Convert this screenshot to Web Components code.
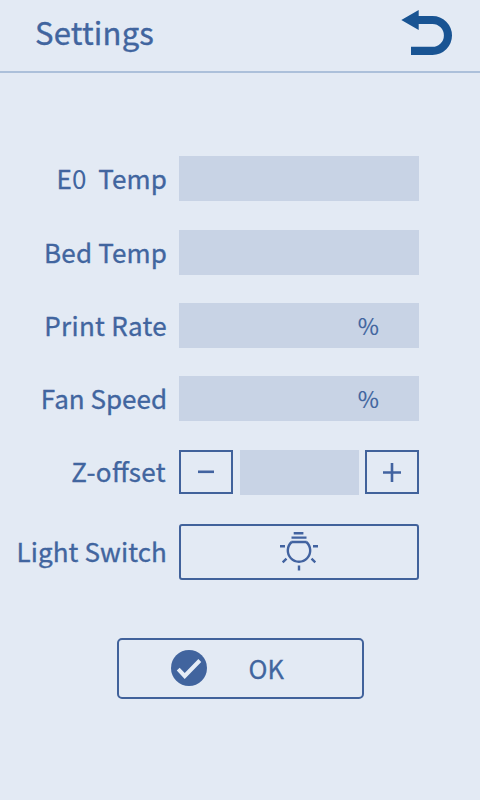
<!DOCTYPE html>
<html lang="en"><head><meta charset="utf-8"><title>Settings</title>
<style>
html,body{margin:0;height:100%;background:#e3eaf4}
body{font-family:"Noto Sans CJK SC","Noto Sans",sans-serif;font-weight:400;color:#41659f;overflow:hidden}
</style></head><body>
<settings-screen></settings-screen>
<script>
function define(name, html){
  const t=document.createElement('template'); t.innerHTML=html;
  customElements.define(name, class extends HTMLElement{
    constructor(){super();this.attachShadow({mode:'open'}).append(t.content.cloneNode(true));}
  });
}
define('settings-header', `<style>
:host{display:flex;justify-content:space-between;box-sizing:border-box;height:73px;border-bottom:2px solid #acc0da;padding:10px 27px 0 35px}
h1{margin:0;font-size:31px;line-height:44px;font-weight:400;letter-spacing:.2px;-webkit-text-stroke:.35px currentColor}
svg{display:block}
</style><h1><slot></slot></h1>
<svg width="52" height="45" viewBox="0 0 52 45" fill="#195493"><path d="M0.3 10 17.7 0V6H31.5A19.5 19.5 0 0 1 31.5 45H10V36.8H31.5A11.3 11.3 0 0 0 31.5 14H17.7V20Z"/></svg>`);
define('setting-row', `<style>
:host{display:grid;grid-template-columns:167px 240px;column-gap:12px;height:45px}
.label{font-size:26px;line-height:44px;text-align:right;white-space:pre;letter-spacing:var(--track,0);-webkit-text-stroke:.35px currentColor}
.control{display:flex;min-width:0}
</style><div class="label"><slot name="label"></slot></div><div class="control"><slot></slot></div>`);
define('value-field', `<style>
:host{display:block;flex:1;box-sizing:border-box;background:#c8d3e5;padding-right:40px;text-align:right;font-size:23px;line-height:44px;-webkit-text-stroke:.15px currentColor}
</style><slot></slot>`);
define('step-button', `<style>
:host{display:flex;box-sizing:border-box;width:54px;height:44px;border:2px solid #41629b;align-items:center;justify-content:center}
</style><slot></slot>`);
define('outline-button', `<style>
:host{display:flex;flex:1;box-sizing:border-box;border:2px solid #41629b;border-radius:var(--radius,3px)}
</style><slot></slot>`);
define('bulb-icon', `<style>:host{display:block;margin:5px auto 0}svg{display:block}</style>
<svg width="40" height="40" viewBox="279 531 40 40" fill="none" stroke="#4263a0" stroke-width="2.4"><path d="M293.7 533.3H303.4M291.5 537.6H306.5M291.3 542H306.7M280 546.2H285M313 546.2H318M286.5 558.7 282.7 562.3M311.5 558.7 315.3 562.3M299 565.5V570.5"/><path d="M291.7 542A11.2 11.2 0 1 0 306.3 542"/></svg>`);
define('check-icon', `<style>:host{display:block}svg{display:block}</style>
<svg width="36" height="36" viewBox="0 0 36 36"><circle cx="18" cy="18" r="18" fill="#41649e"/><path d="M7.2 19.2 13.7 26 28.8 10.5" fill="none" stroke="#e5ecf6" stroke-width="4"/></svg>`);
define('settings-screen', `<style>
:host{display:block;width:480px;height:800px;background:#e3eaf4}
.rows{padding-top:83px;display:grid;grid-template-rows:74px 73px 73px 74px 74px 56px}
.z value-field{flex:none;width:119px;margin:0 6px 0 7px;padding:0}
.light{height:56px}
.z>span{position:relative;top:-1px;left:-1px}
.z i{font-style:normal;letter-spacing:.4px}
.light span{display:block;padding-top:5px}
svg{display:block}
.foot{display:flex;height:61px;width:247px;margin:58px 0 0 117px;--radius:5px}
.foot check-icon{margin:10px 0 0 52px}
.foot span{font-size:25.5px;line-height:56px;margin-left:41.5px;-webkit-text-stroke:.3px currentColor}
.thin{-webkit-text-stroke:0}
</style>
<settings-header>Settings</settings-header>
<div class="rows">
<setting-row style="--track:.1px"><span slot="label">E<span class="thin">0</span>  Temp</span><value-field></value-field></setting-row>
<setting-row style="--track:.15px"><span slot="label">Bed Temp</span><value-field></value-field></setting-row>
<setting-row style="--track:.3px"><span slot="label">Print Rate</span><value-field>%</value-field></setting-row>
<setting-row><span slot="label">Fan Speed</span><value-field>%</value-field></setting-row>
<setting-row class="z"><span slot="label"><i>Z-o</i>ff<i>set</i></span>
<step-button><svg width="18" height="18" fill="none" stroke="#4263a0" stroke-width="2.6"><path d="M1 8.8H17"/></svg></step-button><value-field></value-field><step-button><svg width="18" height="20" fill="none" stroke="#4263a0" stroke-width="2.6"><path d="M0 10.5H18M9 1V20"/></svg></step-button></setting-row>
<setting-row class="light" style="--track:.1px"><span slot="label">Light Switch</span><outline-button><bulb-icon></bulb-icon></outline-button></setting-row>
</div>
<div class="foot"><outline-button><check-icon></check-icon><span>OK</span></outline-button></div>`);
</script></body></html>
